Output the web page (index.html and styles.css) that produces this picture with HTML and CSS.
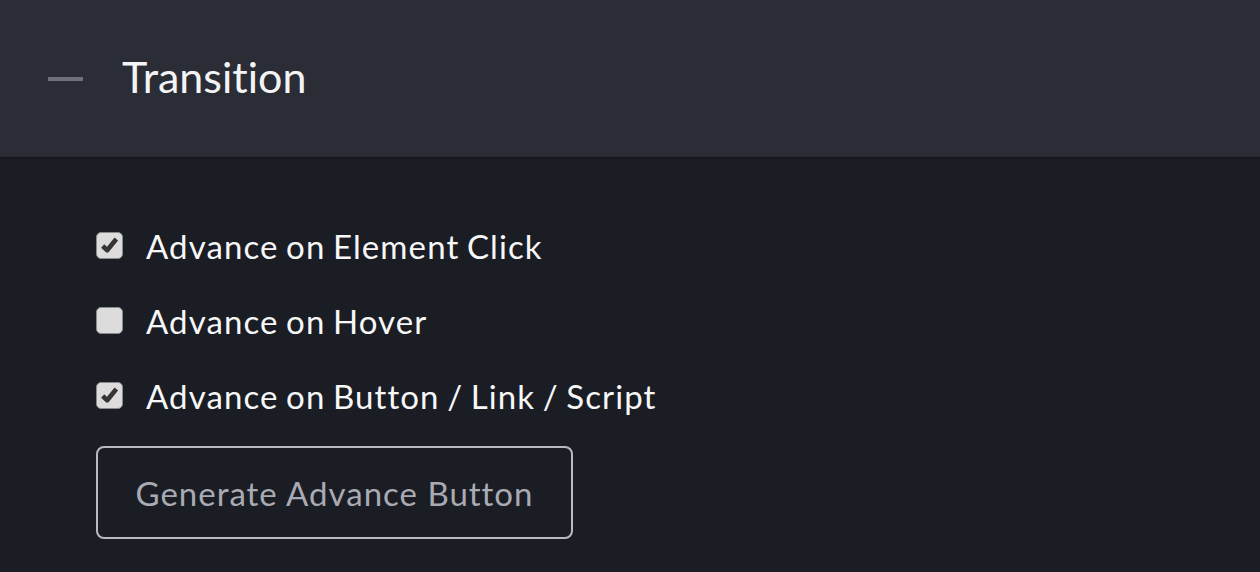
FILE: index.html
```html
<!DOCTYPE html>
<html lang="en">
<head>
    <meta charset="UTF-8">
    <title>Transition</title>
    <link rel="stylesheet" href="styles.css">
</head>
<body>

<div class="panel">
    <!-- Section header -->
    <div class="panel-header">
        <span class="collapse-dash"></span>
        <h2>Transition</h2>
    </div>

    <!-- Options -->
    <div class="panel-body">
        <label class="option">
            <span class="check checked">
                <svg viewBox="0 0 20 20" width="21" height="21"><path d="M3.5 10.5 L7.8 14.5 L16.5 3.8" fill="none" stroke="#353535" stroke-width="4.4" stroke-linejoin="round"/></svg>
            </span>
            Advance on Element Click
        </label>
        <label class="option">
            <span class="check"></span>
            Advance on Hover
        </label>
        <label class="option">
            <span class="check checked">
                <svg viewBox="0 0 20 20" width="21" height="21"><path d="M3.5 10.5 L7.8 14.5 L16.5 3.8" fill="none" stroke="#353535" stroke-width="4.4" stroke-linejoin="round"/></svg>
            </span>
            Advance on Button / Link / Script
        </label>
        <button class="outline-btn">Generate Advance Button</button>
    </div>
</div>

</body>
</html>
```

FILE: styles.css
```css
body {
    margin: 0;
    background-color: #1b1d25;
    font-family: Lato, "Open Sans", sans-serif;
    font-variant-ligatures: none;
    color: #ffffff;
}
.panel-header {
    height: 157px;
    background-color: #2a2d36;
    display: flex;
    align-items: center;
    padding-left: 48px;
    box-shadow: 0 1px 2px rgba(0, 0, 0, 0.4);
}
.collapse-dash {
    width: 35px;
    height: 4px;
    background-color: #6e7079;
    margin-right: 39px;
}
.panel-header h2 {
    margin: 0 0 4px 0;
    font-weight: 400;
    font-size: 43px;
    color: #f4f4f6;
}
.panel-body {
    padding: 67px 0 0 96px;
    display: flex;
    flex-direction: column;
    align-items: flex-start;
}
.option {
    display: flex;
    align-items: center;
    height: 43px;
    margin-bottom: 32px;
    font-size: 33px;
    letter-spacing: 1.1px;
    word-spacing: -2px;
    color: #f7f7f8;
}
.check {
    width: 27px;
    height: 27px;
    box-sizing: border-box;
    border-radius: 5px;
    background-color: #dcdcdc;
    border: 1px solid #8a8a8a;
    margin-right: 23px;
    display: flex;
    align-items: center;
    justify-content: center;
}
.outline-btn {
    margin-top: -3px;
    width: 477px;
    height: 93px;
    background: transparent;
    border: 2px solid #b8bac0;
    border-radius: 8px;
    color: #a9abb3;
    font-family: inherit;
    font-size: 33px;
    letter-spacing: 1px;
}
```
